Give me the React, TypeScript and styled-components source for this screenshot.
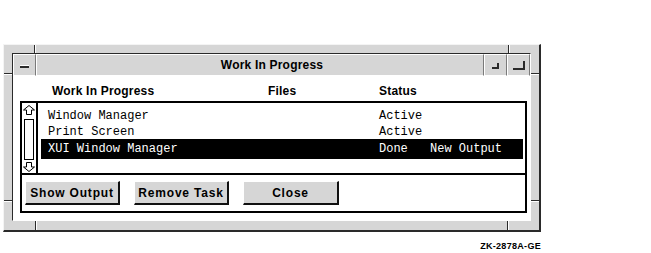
import React from "react";
import styled, { createGlobalStyle } from "styled-components";

const GlobalStyle = createGlobalStyle`
  html, body {
    margin: 0;
    padding: 0;
    background: #ffffff;
  }
  body {
    width: 651px;
    height: 253px;
    overflow: hidden;
    font-family: "Liberation Sans", Arial, sans-serif;
  }
`;

const GRAY = "#d6d6d6";
const DARK = "#2a2a2a";

type Task = {
  id: number;
  name: string;
  status: string;
  note?: string;
  selected?: boolean;
};

const tasks: Task[] = [
  { id: 1, name: "Window Manager", status: "Active" },
  { id: 2, name: "Print Screen", status: "Active" },
  { id: 3, name: "XUI Window Manager", status: "Done", note: "New Output", selected: true },
];

// resize-corner ticks of the mwm frame, relative to the frame padding box
const ticks: { x: number; y: number; dir: "v" | "h"; len: number }[] = [
  { x: 30, y: 0, dir: "v", len: 8 },
  { x: 0, y: 28, dir: "h", len: 8 },
  { x: 504, y: 0, dir: "v", len: 8 },
  { x: 527, y: 28, dir: "h", len: 8 },
  { x: 31, y: 176, dir: "v", len: 9 },
  { x: 0, y: 155, dir: "h", len: 8 },
  { x: 503, y: 176, dir: "v", len: 9 },
  { x: 527, y: 155, dir: "h", len: 8 },
];

const ArrowIcon = ({ down }: { down?: boolean }) => (
  <svg width="12" height="10" viewBox="0 0 12 10">
    <polygon
      points="6,0.5 11.5,5 8.5,5 8.5,9.5 3.5,9.5 3.5,5 0.5,5"
      fill="#fff"
      stroke="#000"
      strokeWidth="1"
      transform={down ? "rotate(180 6 5)" : undefined}
    />
  </svg>
);

const App = (): JSX.Element => {
  return (
    <>
      <GlobalStyle />
      <Page>
        <Frame>
          {ticks.map((t, i) => (
            <Tick key={i} $x={t.x} $y={t.y} $dir={t.dir} $len={t.len} />
          ))}
          <Inner>
            <TitleBar>
              <MenuButton>
                <Dash />
              </MenuButton>
              <Title>Work In Progress</Title>
              <CornerButton>
                <CornerIcon $w={5} $h={4} />
              </CornerButton>
              <CornerButton>
                <CornerIcon $w={10} $h={7} />
              </CornerButton>
            </TitleBar>
            <Client>
              <Header>
                <span>Work In Progress</span>
                <span>Files</span>
                <span>Status</span>
              </Header>
              <Box>
                <ListArea>
                  <ScrollBar>
                    <ArrowIcon />
                    <Slider />
                    <ArrowIcon down />
                  </ScrollBar>
                  <List>
                    {tasks.map((t) => (
                      <Row key={t.id} $selected={!!t.selected}>
                        <span>{t.name}</span>
                        <span>{t.status}</span>
                        <span>{t.note ?? ""}</span>
                      </Row>
                    ))}
                  </List>
                </ListArea>
                <ButtonRow>
                  <PushButton>Show Output</PushButton>
                  <PushButton>Remove Task</PushButton>
                  <PushButton $wide>Close</PushButton>
                </ButtonRow>
              </Box>
            </Client>
          </Inner>
        </Frame>
        <Caption>ZK-2878A-GE</Caption>
      </Page>
    </>
  );
};

export default App;

const Page = styled.div`
  padding: 44px 0 0 3px;
  width: 538px;
`;

const Frame = styled.div`
  position: relative;
  box-sizing: border-box;
  width: 538px;
  height: 188px;
  padding: 8px 8px 9px 8px;
  background: ${GRAY};
  border-top: 1px solid #f4f4f4;
  border-left: 1px solid #f4f4f4;
  border-right: 2px solid ${DARK};
  border-bottom: 2px solid ${DARK};
`;

const Tick = styled.span<{ $x: number; $y: number; $dir: "v" | "h"; $len: number }>`
  position: absolute;
  left: ${(p) => p.$x}px;
  top: ${(p) => p.$y}px;
  width: ${(p) => (p.$dir === "v" ? 1 : p.$len)}px;
  height: ${(p) => (p.$dir === "v" ? p.$len : 1)}px;
  background: ${DARK};
  ${(p) =>
    p.$dir === "v" ? "border-right: 1px solid #fff;" : "border-bottom: 1px solid #fff;"}
`;

const Inner = styled.div`
  box-sizing: border-box;
  height: 100%;
  display: flex;
  flex-direction: column;
  border-top: 1px solid ${DARK};
  border-left: 1px solid ${DARK};
  border-right: 1px solid #ffffff;
  border-bottom: 1px solid #ffffff;
`;

const TitleBar = styled.div`
  display: flex;
  height: 22px;
  flex-shrink: 0;
`;

const TitlePiece = styled.div`
  box-sizing: border-box;
  height: 22px;
  background: ${GRAY};
  border-top: 1px solid #ffffff;
  border-left: 1px solid #ffffff;
  border-right: 1px solid #7a7a7a;
  border-bottom: 1px solid #ffffff;
  display: flex;
  align-items: center;
  justify-content: center;
`;

const MenuButton = styled(TitlePiece)`
  width: 23px;
`;

const Dash = styled.span`
  width: 9px;
  height: 0;
  border-top: 1px solid #ffffff;
  border-bottom: 2px solid ${DARK};
  margin-top: 2px;
`;

const Title = styled(TitlePiece)`
  flex: 1;
  padding-left: 24px;
  font-size: 12px;
  font-weight: bold;
  letter-spacing: 0.2px;
  color: #000;
`;

const CornerButton = styled(TitlePiece)`
  width: 23px;
`;

const CornerIcon = styled.span<{ $w: number; $h: number }>`
  width: ${(p) => p.$w}px;
  height: ${(p) => p.$h}px;
  border-right: 2px solid ${DARK};
  border-bottom: 2px solid ${DARK};
  margin-top: 1px;
`;

const Client = styled.div`
  flex: 1;
  background: #ffffff;
  padding: 8px 0 0 7px;
`;

const Header = styled.div`
  display: grid;
  grid-template-columns: 216px 111px auto;
  padding-left: 32px;
  height: 14px;
  line-height: 14px;
  font-size: 12px;
  font-weight: bold;
  letter-spacing: 0.2px;
  color: #000;
`;

const Box = styled.div`
  box-sizing: border-box;
  margin-top: 3px;
  width: 507px;
  height: 112px;
  border: 2px solid #000;
  display: flex;
  flex-direction: column;
`;

const ListArea = styled.div`
  display: flex;
  height: 70px;
  border-bottom: 2px solid #000;
`;

const ScrollBar = styled.div`
  box-sizing: border-box;
  width: 16px;
  border-right: 2px solid #000;
  display: flex;
  flex-direction: column;
  align-items: center;
  padding: 2px 0 1px 0;

  & > svg {
    display: block;
    flex-shrink: 0;
  }
`;

const Slider = styled.div`
  box-sizing: border-box;
  flex: 1;
  width: 10px;
  margin: 4px 0 2px 0;
  border: 1px solid #000;
  background: #fff;
`;

const List = styled.div`
  flex: 1;
  padding: 5px 2px 0 3px;
  font-family: "Liberation Mono", "Courier New", monospace;
  font-size: 12px;
`;

const Row = styled.div<{ $selected: boolean }>`
  display: grid;
  grid-template-columns: 331px 51px auto;
  padding-left: 7px;
  height: ${(p) => (p.$selected ? 20 : 16)}px;
  line-height: ${(p) => (p.$selected ? 20 : 16)}px;
  margin-top: ${(p) => (p.$selected ? -1 : 0)}px;
  white-space: pre;
  background: ${(p) => (p.$selected ? "#000" : "transparent")};
  color: ${(p) => (p.$selected ? "#fff" : "#000")};
`;

const ButtonRow = styled.div`
  display: flex;
  gap: 14px;
  padding: 6px 3px;
`;

const PushButton = styled.button<{ $wide?: boolean }>`
  box-sizing: border-box;
  width: ${(p) => (p.$wide ? 96 : 95)}px;
  height: 24px;
  margin: 0;
  padding: 0;
  background: ${GRAY};
  border: none;
  border-top: 1px solid #ffffff;
  border-left: 1px solid #ffffff;
  border-right: 2px solid #111;
  border-bottom: 2px solid #111;
  font-family: "Liberation Sans", Arial, sans-serif;
  font-size: 12px;
  font-weight: bold;
  letter-spacing: 0.8px;
  color: #000;
  cursor: pointer;
`;

const Caption = styled.div`
  margin-top: 8px;
  text-align: right;
  font-size: 9px;
  line-height: 12px;
  font-weight: bold;
  letter-spacing: 0.3px;
  color: #000;
`;
